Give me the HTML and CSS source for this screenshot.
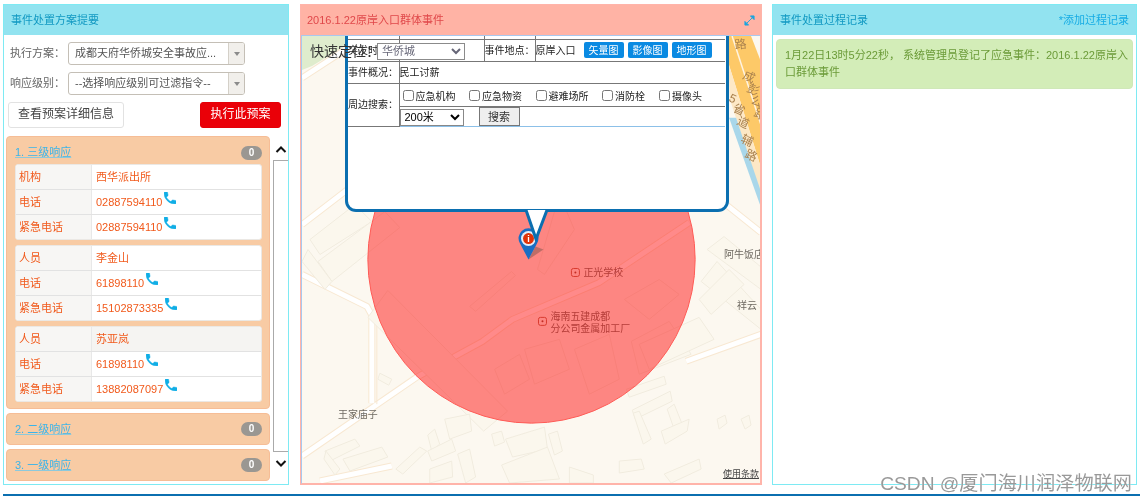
FILE: index.html
```html
<!DOCTYPE html>
<html lang="zh-CN">
<head>
<meta charset="utf-8">
<title>事件处置</title>
<link rel="stylesheet" href="styles.css">
</head>
<body>
<svg class="sprite" width="0" height="0"><defs>
  <symbol id="tel" viewBox="3 3 18 18"><path d="M6.600 10.800c1.400 2.800 3.800 5.100 6.600 6.600l2.200-2.200c.3-.3.7-.4 1-.2 1.100.4 2.300.6 3.600.6.600 0 1 .4 1 1V20c0 .6-.4 1-1 1C10.600 21 3 13.400 3 4c0-.6.4-1 1-1h3.500c.6 0 1 .4 1 1 0 1.300.2 2.500.6 3.600.1.300 0 .7-.2 1z"/></symbol>
</defs></svg>
<main class="layout">
  <section class="panel panel-left">
    <header class="panel-head panel-head-left">事件处置方案提要</header>
    <div class="form-row">
      <span class="form-label">执行方案：</span>
      <div class="combo"><span class="combo-text">成都天府华侨城安全事故应...</span><span class="combo-arrow"></span></div>
    </div>
    <div class="form-row">
      <span class="form-label">响应级别：</span>
      <div class="combo"><span class="combo-text">--选择响应级别可过滤指令--</span><span class="combo-arrow"></span></div>
    </div>
    <div class="actions">
      <button class="btn btn-plain">查看预案详细信息</button>
      <button class="btn btn-red">执行此预案</button>
    </div>
    <div class="plan-area">
      <div class="accordion">
        <div class="acc-item">
          <div class="acc-head"><a class="acc-title">1. 三级响应</a><span class="badge">0</span></div>
          <div class="contact">
            <div class="c-row"><span class="c-key">机构</span><span class="c-val">西华派出所</span></div>
            <div class="c-row"><span class="c-key">电话</span><span class="c-val">02887594110<svg class="tel"><use href="#tel"/></svg></span></div>
            <div class="c-row"><span class="c-key">紧急电话</span><span class="c-val">02887594110<svg class="tel"><use href="#tel"/></svg></span></div>
          </div>
          <div class="contact">
            <div class="c-row"><span class="c-key">人员</span><span class="c-val">李金山</span></div>
            <div class="c-row"><span class="c-key">电话</span><span class="c-val">61898110<svg class="tel"><use href="#tel"/></svg></span></div>
            <div class="c-row"><span class="c-key">紧急电话</span><span class="c-val">15102873335<svg class="tel"><use href="#tel"/></svg></span></div>
          </div>
          <div class="contact contact-striped">
            <div class="c-row"><span class="c-key">人员</span><span class="c-val">苏亚岚</span></div>
            <div class="c-row"><span class="c-key">电话</span><span class="c-val">61898110<svg class="tel"><use href="#tel"/></svg></span></div>
            <div class="c-row"><span class="c-key">紧急电话</span><span class="c-val">13882087097<svg class="tel"><use href="#tel"/></svg></span></div>
          </div>
        </div>
        <div class="acc-item acc-closed">
          <div class="acc-head"><a class="acc-title">2. 二级响应</a><span class="badge">0</span></div>
        </div>
        <div class="acc-item acc-closed">
          <div class="acc-head"><a class="acc-title">3. 一级响应</a><span class="badge">0</span></div>
        </div>
      </div>
      <div class="scroller">
        <svg class="chev chev-up" viewBox="0 0 12 8"><path d="M1.500 6.500 6 2l4.500 4.500"/></svg>
        <div class="scroll-track"></div>
        <svg class="chev chev-down" viewBox="0 0 12 8"><path d="M1.500 1.500 6 6l4.500-4.500"/></svg>
      </div>
    </div>
  </section>

  <section class="panel panel-mid">
    <header class="panel-head panel-head-red">
      <span>2016.1.22原岸入口群体事件</span>
      <svg class="expand" viewBox="0 0 12 12"><path d="M7 1h4v4zM1 7v4h4zM3 9l6-6" /></svg>
    </header>
    <div class="map">
      <svg class="map-art" viewBox="302 36 459 448" preserveAspectRatio="none">
        <rect x="302" y="36" width="459" height="448" fill="#fcf8f0"/>
        <polygon points="302,36 345,36 345,46 312,66 302,70" fill="#dfeccd"/>
        <polygon points="728,36 752,36 762,62 762,168 729,62" fill="#fdc968"/>
        <polygon points="729,62 762,168 762,195 731,100" fill="#fde8c6"/>
        <polygon points="730,118 737,118 762,192 762,208" fill="#a9d7ea"/>
        <path d="M733 36 762 125" stroke="#fff3e0" stroke-width="1.500" fill="none"/>
        <g fill="none" stroke="#f8e8d2" stroke-width="7" stroke-linejoin="round">
          <path d="M302 78 345 50M302 225 350 188M302 275 367 307 372 316 372 404M302 457 417 378 483 342 513 320 600 283 690 223M727 205 762 233M687 362 762 335M320 482 392 467"/>
        </g>
        <g fill="none" stroke="#fff" stroke-width="5" stroke-linejoin="round">
          <path d="M302 78 345 50M302 225 350 188M302 275 367 307 372 316 372 404M302 457 417 378 483 342 513 320 600 283 690 223M727 205 762 233M687 362 762 335M320 482 392 467"/>
        </g>
        <path d="M377 320V405" stroke="#f8e8d2" fill="none"/>
        <g fill="#fbf7ed" stroke="#f1ecdf">
          <polygon points="310,240 355,205 372,222 320,255"/>
          <polygon points="318,262 385,212 400,228 332,282"/>
          <polygon points="308,250 332,282 325,290 302,262"/>
          <polygon points="388,291 508,412 484,432 368,318"/>
          <polygon points="470,307 512,272 516,276 476,312"/>
          <polygon points="560,195 575,230 545,275 538,270"/>
          <polygon points="625,300 660,280 680,295 650,320"/>
          <polygon points="632,342 670,322 692,355 640,375"/>
          <polygon points="575,350 610,335 620,380 590,395"/>
          <polygon points="525,350 560,340 570,370 535,385"/>
          <polygon points="495,370 520,355 530,380 505,395"/>
          <polygon points="725,237 765,270 762,290 708,250"/>
          <polygon points="718,262 762,310 762,330 702,282"/>
          <polygon points="700,300 730,270 745,285 712,315"/>
          <polygon points="640,345 700,318 715,340 650,370"/>
          <polygon points="627,390 665,377 667,385 630,398"/>
          <polygon points="633,411 671,392 673,402 636,420"/>
          <polygon points="634,414 640,412 652,440 644,445"/>
          <polygon points="668,410 675,405 685,430 677,436"/>
          <polygon points="662,432 690,420 688,432 666,445"/>
          <polygon points="380,374 392,380 389,386 378,380"/>
          <polygon points="428,436 435,430 440,445 432,452"/>
          <polygon points="445,420 470,415 472,432 450,440"/>
          <polygon points="506,440 545,428 548,450 513,458"/>
          <polygon points="549,435 558,432 563,452 555,456"/>
          <polygon points="492,435 502,432 505,443 495,447"/>
          <polygon points="325,452 355,440 360,447 330,462"/>
          <polygon points="343,460 382,448 388,458 350,472"/>
          <polygon points="326,452 340,470 335,476 324,460"/>
          <polygon points="396,470 420,448 427,452 403,475"/>
          <polygon points="428,452 452,440 456,452 432,462"/>
          <polygon points="430,470 452,462 453,478 430,484"/>
          <polygon points="458,455 470,450 476,478 466,484"/>
          <polygon points="502,466 548,448 560,480 510,484"/>
          <polygon points="570,468 594,476 594,484 570,484"/>
          <polygon points="620,462 642,460 645,470 620,474"/>
          <polygon points="665,475 700,460 702,470 672,484"/>
          <polygon points="718,420 726,416 728,424 720,430"/>
          <polygon points="742,420 750,416 752,426 746,430"/>
        </g>
        <g class="map-label">
          <text x="725" y="259">阿牛饭店</text>
          <text x="738" y="310">祥云</text>
          <text x="338" y="419">王家庙子</text>
          <text x="584" y="277">正光学校</text>
          <text x="551" y="321">海南五建成都</text>
          <text x="551" y="333">分公司金属加工厂</text>
        </g>
        <g class="road-label">
          <text transform="translate(736 49) rotate(-6)">路</text>
          <text transform="translate(743 78) rotate(25)">成</text>
          <text transform="translate(747 91) rotate(25)">彭</text>
          <text transform="translate(751 103) rotate(25)">公</text>
          <text transform="translate(754 116) rotate(25)">路</text>
          <text transform="translate(729 101) rotate(25)">5</text>
          <text transform="translate(733 111) rotate(25)">省</text>
          <text transform="translate(737 124) rotate(25)">道</text>
          <text transform="translate(741 142) rotate(25)">辅</text>
          <text transform="translate(745 157) rotate(25)">路</text>
        </g>
        <g fill="none" stroke="#b5654f"><rect x="572" y="269" width="8" height="8" rx="2"/><rect x="539" y="318" width="8" height="8" rx="2"/></g>
        <circle cx="576" cy="273" r="1" fill="#8a4a3a"/><circle cx="543" cy="322" r="1" fill="#8a4a3a"/>
        <circle cx="532" cy="260" r="164" fill="#ff0a0a" fill-opacity=".48" stroke="#ff5a55" stroke-width="1"/>
        <polygon points="529,260 536,247 544,250" fill="#8a5a52" opacity=".55"/>
        <path d="M529 260 520.500 244a10 10 0 1 1 17 0z" fill="#1a6ec4"/>
        <circle cx="529" cy="239" r="7.500" fill="#e6edf7"/>
        <circle cx="529" cy="239" r="5.500" fill="#e03208"/>
        <text class="pin-i" x="529" y="242">i</text>
      </svg>
      <div class="locate">
        <span class="locate-label">快速定位：</span>
        <select class="locate-select"><option>华侨城</option></select>
      </div>
      <a class="terms">使用条款</a>
      <svg class="tail" viewBox="0 0 22 32"><path d="M0 0 10 29 21 0" fill="#fff" stroke="#0b6fb0" stroke-width="3"/></svg>
      <div class="popup">
        <table class="info">
          <tr class="row-stub"><td class="col-a"></td><td class="col-b"></td><td class="col-c"></td><td></td></tr>
          <tr class="row-main">
            <td>突发时间：</td><td></td><td>事件地点：</td>
            <td><div class="place">原岸入口<span class="map-btns"><button class="map-btn">矢量图</button><button class="map-btn">影像图</button><button class="map-btn">地形图</button></span></div></td>
          </tr>
          <tr class="row-main"><td>事件概况：</td><td colspan="3">民工讨薪</td></tr>
          <tr class="row-check">
            <td rowspan="2">周边搜索：</td>
            <td colspan="3">
              <div class="checks">
                <label class="check"><input type="checkbox">应急机构</label>
                <label class="check"><input type="checkbox">应急物资</label>
                <label class="check"><input type="checkbox">避难场所</label>
                <label class="check check-short"><input type="checkbox">消防栓</label>
                <label class="check"><input type="checkbox">摄像头</label>
              </div>
            </td>
          </tr>
          <tr class="row-search">
            <td colspan="3"><select class="range"><option>200米</option></select><button class="search">搜索</button></td>
          </tr>
        </table>
      </div>
    </div>
  </section>

  <section class="panel panel-right">
    <header class="panel-head"><span>事件处置过程记录</span><a class="add-link">*添加过程记录</a></header>
    <div class="log-entry">1月22日13时5分22秒， 系统管理员登记了应急事件：2016.1.22原岸入口群体事件</div>
  </section>
</main>
<div class="bottom-rule"></div>
<div class="watermark">CSDN @厦门海川润泽物联网</div>
</body>
</html>
```

FILE: styles.css
```css
* { box-sizing: border-box; }
html, body { margin: 0; height: 501px; overflow: hidden; background: #fff; }
body {
  position: relative;
  padding: 4px 6px 0 3px;
  font: 11px/1.3 "Liberation Sans", "Noto Sans CJK SC", sans-serif;
  color: #555;
  filter: blur(.3px);
}
.sprite { position: absolute; }
.layout { display: flex; height: 481px; }
.panel { display: flex; flex-direction: column; border: 1px solid #7eeaf3; background: #fff; }
.panel-left { width: 286px; }
.panel-mid { width: 462px; margin-left: 11px; border-color: #ffb4aa; }
.panel-right { width: 365px; margin-left: 10px; }
.panel-head {
  flex: none;
  display: flex;
  justify-content: space-between;
  align-items: center;
  height: 30px;
  padding: 0 7px;
  background: #92e3f0;
  color: #1199c2;
}
.panel-head-left { padding: 0 7px; }
.panel-head-red { background: #ffb3a5; color: #e0484a; padding: 0 6px; }
.expand { width: 11px; height: 11px; fill: #19a4df; stroke: #19a4df; stroke-width: 1; }
.add-link { color: #16ace4; }

.form-row { display: flex; align-items: center; height: 23px; margin: 7px 0 0 6px; }
.form-row + .form-row { margin-top: 7px; }
.form-label { width: 58px; color: #666; }
.combo {
  display: flex;
  width: 177px;
  height: 23px;
  border: 1px solid #c4bfb6;
  border-radius: 3px;
  background: #fff;
  overflow: hidden;
}
.combo-text { flex: 1; padding-left: 6px; line-height: 21px; color: #555; white-space: nowrap; }
.combo-arrow { position: relative; width: 16px; background: #f1efeb; border-left: 1px solid #d4d0c8; }
.combo-arrow::after {
  content: "";
  position: absolute;
  left: 5px;
  top: 9px;
  border: 3px solid transparent;
  border-top: 4px solid #8b8b8b;
  border-bottom: 0;
}
.actions { display: flex; justify-content: space-between; height: 26px; margin: 7px 7px 0 4px; }
.btn { height: 26px; border-radius: 3px; font: inherit; font-size: 12px; padding: 0; }
.btn-plain { width: 116px; background: #fff; border: 1px solid #e2e2e2; color: #444; }
.btn-red { width: 81px; background: #ea0008; border: 1px solid #e40008; color: #fff; }

.plan-area { display: flex; margin: 8px 0 0 2px; }
.accordion { width: 264px; }
.acc-item {
  margin-bottom: 4px;
  padding: 0 7px 6px 8px;
  background: #f8cba4;
  border: 1px solid #f6bd96;
  border-radius: 4px;
}
.acc-closed { height: 32px; padding-bottom: 0; }
.acc-closed .acc-head { height: 30px; padding-top: 0; }
.acc-head { display: flex; justify-content: space-between; align-items: center; height: 27px; padding-top: 4px; }
.acc-title { color: #3ab4ea; text-decoration: underline; text-decoration-color: #8cc9dc; }
.badge {
  width: 21px;
  height: 14px;
  border-radius: 7px;
  background: #9a9792;
  color: #fff;
  font-weight: bold;
  font-size: 10px;
  line-height: 14px;
  text-align: center;
}
.contact { border: 1px solid #ebe8e4; border-radius: 3px; background: #fff; overflow: hidden; }
.contact + .contact { margin-top: 5px; }
.c-row { display: flex; height: 25px; line-height: 25px; color: #f15a1c; border-top: 1px solid #e2e2e2; }
.c-row:first-child { border-top: 0; height: 24px; }
.c-key { width: 76px; padding-left: 3px; background: #f7f6f4; border-right: 1px solid #e8e8e8; }
.c-val { flex: 1; padding-left: 4px; }
.contact-striped .c-row:first-child .c-val { background: #f5f4f2; }
.tel { width: 12px; height: 12px; margin-left: 2px; vertical-align: 2px; fill: #10aee6; stroke: #10aee6; stroke-width: .8; }
.scroller { display: flex; flex-direction: column; align-items: center; width: 15px; margin-left: 3px; }
.chev { flex: none; width: 12px; height: 9px; fill: none; stroke: #111; stroke-width: 2; }
.chev-up { margin: 9px 0 6px; }
.chev-down { margin-top: 7px; }
.scroll-track { width: 15px; height: 292px; background: #fff; border: 1px solid #aaa; border-right: 0; }

.map { position: relative; flex: 1; overflow: hidden; border: 1px solid #a9c8ee; border-right-color: #ffb4aa; border-bottom-color: #ffb4aa; }
.map-art { display: block; width: 100%; height: 100%; }
.map-label text { font-size: 10px; fill: #6f6a62; }
.road-label text { font-size: 12px; fill: #a9814e; }
.pin-i { font-size: 9px; font-weight: bold; fill: #fff; text-anchor: middle; }
.locate { position: absolute; left: 8px; top: 6px; display: flex; align-items: center; gap: 0; font-size: 14px; color: #333; z-index: 3; }
.locate-label { width: 67px; white-space: nowrap; }
.locate-select { width: 88px; height: 17px; padding: 0; font: 11px "Liberation Sans", "Noto Sans CJK SC", sans-serif; color: #667; border: 1px solid #8b8b8b; background: #fff; }
.terms { position: absolute; right: 1px; bottom: 2px; font-size: 9px; color: #444; text-decoration: underline; }
.tail { position: absolute; left: 224px; top: 174px; width: 22px; height: 32px; overflow: visible; z-index: 2; }
.popup {
  position: absolute;
  left: 43px;
  top: -6px;
  width: 384px;
  height: 182px;
  background: #fff;
  border: 3px solid #0b6fb0;
  border-radius: 0 0 11px 11px;
  z-index: 1;
}
.info { width: 377px; border-collapse: collapse; table-layout: fixed; font-size: 10px; color: #222; }
.info td { padding: 0; border: 1px solid #777; white-space: nowrap; }
.info td:first-child { border-left: 0; }
.info td:last-child { border-right: 0; }
.col-a { width: 51px; }
.col-b { width: 85px; }
.col-c { width: 51px; }
.row-stub td { height: 6px; border-top: 0; }
.row-main td { height: 22px; }
.row-check td { height: 23px; }
.row-search td { height: 19px; border-bottom-color: #8cc0e8; }
.place { display: flex; align-items: center; }
.map-btns { display: flex; gap: 4px; margin-left: 8px; }
.map-btn { width: 40px; height: 16px; padding: 0; border: 0; border-radius: 2px; background: #0a8ae2; color: #fff; font: inherit; }
.checks { display: flex; padding: 3px 0 0 2px; }
.check { display: flex; align-items: center; width: 66.500px; }
.check-short { width: 57px; }
.check input { width: 11px; height: 11px; margin: 0 2px 2px 1px; }
.range { width: 64px; height: 17px; padding: 0; font: 11px "Liberation Sans", "Noto Sans CJK SC", sans-serif; border: 1px solid #888; background: #fff; }
.search { width: 41px; height: 19px; margin-left: 15px; padding: 0; font: 11px "Liberation Sans", "Noto Sans CJK SC", sans-serif; background: #efefef; border: 1px solid #777; color: #333; }

.log-entry {
  margin: 4px 3px 0;
  padding: 7px 4px 7px 8px;
  background: #d3edb8;
  border: 1px solid #cfe8b8;
  border-radius: 4px;
  color: #6b9b38;
  line-height: 17px;
}
.bottom-rule { height: 2px; width: 1137px; margin-top: 9px; background: #0b6fb0; }
.watermark {
  position: absolute;
  right: 14px;
  top: 470px;
  font-size: 19.200px;
  line-height: 27px;
  color: #999;
  white-space: nowrap;
  text-shadow: 0 0 1px #fff;
}
```
